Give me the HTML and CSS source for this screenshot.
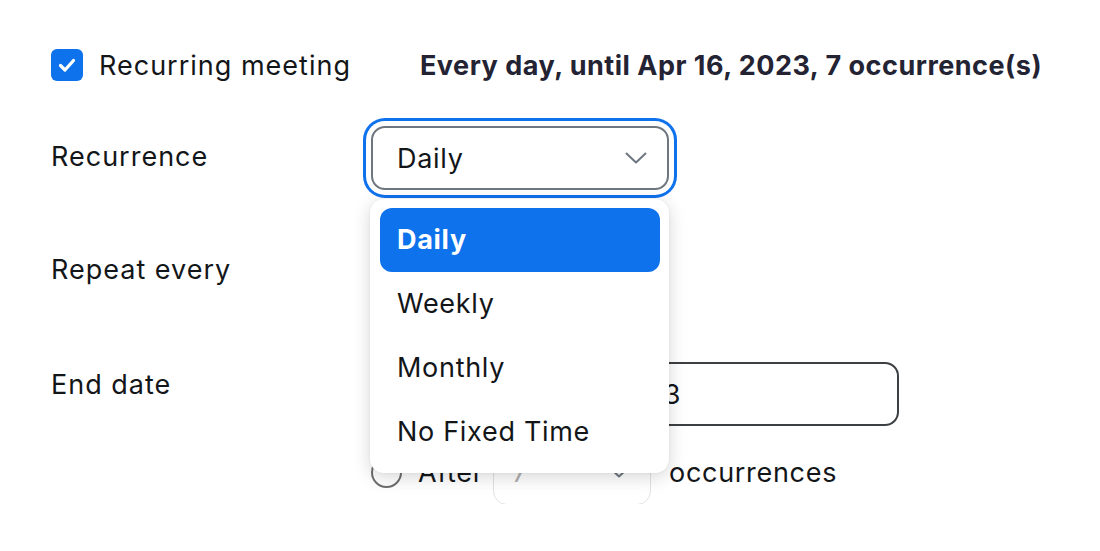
FILE: index.html
```html
<!DOCTYPE html>
<html lang="en">
<head>
<meta charset="utf-8">
<title>Recurring meeting</title>
<link rel="stylesheet" href="styles.css">
</head>
<body>
<div class="form">
  <div class="row-top">
    <label class="check">
      <span class="checkbox">
        <svg width="32" height="32" viewBox="0 0 32 32"><path d="M9.5 16.5 L14 21 L22.5 11.5" fill="none" stroke="#fff" stroke-width="3.2" stroke-linecap="round" stroke-linejoin="round"/></svg>
      </span>
      <span class="check-label">Recurring meeting</span>
    </label>
    <span class="summary">Every day, until Apr 16, 2023, 7 occurrence(s)</span>
  </div>

  <div class="row row-recurrence">
    <span class="label">Recurrence</span>
    <div class="select-wrap">
      <div class="select focused">
        <span class="value">Daily</span>
        <svg class="chev" width="22" height="12" viewBox="0 0 22 12"><path d="M1.5 1.5 L11 10.5 L20.5 1.5" fill="none" stroke="#6e7680" stroke-width="2" stroke-linecap="round" stroke-linejoin="round"/></svg>
      </div>
      <ul class="menu">
        <li class="item active">Daily</li>
        <li class="item">Weekly</li>
        <li class="item">Monthly</li>
        <li class="item">No Fixed Time</li>
      </ul>
    </div>
  </div>

  <div class="row row-repeat">
    <span class="label">Repeat every</span>
    <div class="select small"><span class="value">1</span></div>
    <span class="unit">day</span>
  </div>

  <div class="row row-end">
    <span class="label label-end">End date</span>
    <div class="options">
      <div class="option">
        <span class="radio checked"></span>
        <span class="opt-text">By</span>
        <div class="input date">Apr 16, 2023</div>
      </div>
      <div class="option">
        <span class="radio"></span>
        <span class="opt-text">After</span>
        <div class="select count">
          <span class="value">7</span>
          <svg class="chev" width="22" height="12" viewBox="0 0 22 12"><path d="M1.5 1.5 L11 10.5 L20.5 1.5" fill="none" stroke="#6e7680" stroke-width="2" stroke-linecap="round" stroke-linejoin="round"/></svg>
        </div>
        <span class="opt-text after">occurrences</span>
      </div>
    </div>
  </div>
</div>
</body>
</html>
```

FILE: styles.css
```css
* { box-sizing: border-box; }
html, body { margin: 0; background: #ffffff; }
body {
  font-family: Inter, "Noto Sans", "Liberation Sans", sans-serif;
  color: #131619;
  font-size: 27px;
  letter-spacing: 0.7px;
}
.form {
  padding: 49px 0 0 51px;
}
.row-top {
  display: flex;
  align-items: center;
  height: 32px;
}
.check {
  display: flex;
  align-items: center;
}
.checkbox {
  width: 32px;
  height: 32px;
  border-radius: 6px;
  background: #0e72ed;
  display: block;
}
.checkbox svg { display: block; }
.check-label {
  margin-left: 16px;
  letter-spacing: 1px;
}
.summary {
  margin-left: 69px;
  font-weight: 700;
  font-size: 27px;
  color: #232333;
  letter-spacing: 0.5px;
}
.row {
  display: flex;
  align-items: center;
}
.label {
  width: 320px;
  flex: none;
  letter-spacing: 1px;
  padding-bottom: 3px;
}
.row-recurrence { margin-top: 45px; height: 64px; }
.row-repeat { margin-top: 49px; height: 64px; }
.row-end { margin-top: 59px; align-items: flex-start; }
.label-end { padding-top: 6px; }

.select-wrap { position: relative; }
.select {
  display: flex;
  align-items: center;
  justify-content: space-between;
  height: 64px;
  border: 2px solid #6e7680;
  border-radius: 14px;
  background: #fff;
  padding: 0 20px 0 24px;
}
.select.focused {
  width: 298px;
  box-shadow: 0 0 0 5px #ffffff, 0 0 0 8px #0e72ed;
}
.select .chev { display: block; }
.select.small { width: 120px; }
.unit { margin-left: 16px; }

.menu {
  position: absolute;
  top: calc(100% + 9px);
  left: -1px;
  width: 299px;
  margin: 0;
  padding: 9px 9px 9px 10px;
  list-style: none;
  background: #fff;
  border-radius: 14px;
  box-shadow: 0 4px 18px rgba(0, 0, 0, 0.16), 0 0 3px rgba(0, 0, 0, 0.06);
  z-index: 10;
}
.item {
  height: 64px;
  display: flex;
  align-items: center;
  padding-left: 17px;
  padding-bottom: 2px;
  border-radius: 12px;
  letter-spacing: 0.7px;
}
.item.active {
  background: #0e72ed;
  color: #fff;
  font-weight: 700;
}

.options { display: flex; flex-direction: column; gap: 14px; }
.option { display: flex; align-items: center; height: 64px; }
.radio {
  width: 31px;
  height: 31px;
  border-radius: 50%;
  border: 2px solid #6e6e6e;
  flex: none;
}
.opt-text { margin-left: 16px; }
.option .opt-text:not(.after) { width: 75px; }
.opt-text.after { margin-left: 18px; }
.input.date {
  margin-left: 0;
  width: 406px;
  height: 64px;
  border: 2px solid #3c4043;
  border-radius: 14px;
  display: flex;
  align-items: center;
  padding-left: 16px;
}
.select.count {
  margin-left: 0;
  width: 158px;
  height: 66px;
  border: 1px solid #e2e2e2;
  color: #b0b0b0;
  padding: 0 20px 0 18px;
}
```
